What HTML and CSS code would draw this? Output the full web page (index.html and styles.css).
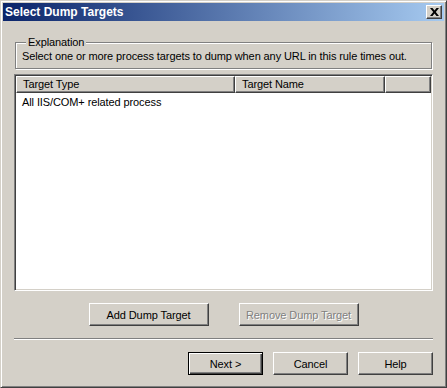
FILE: index.html
```html
<!DOCTYPE html>
<html lang="en">
<head>
    <meta charset="UTF-8">
    <title>Select Dump Targets</title>
    <link rel="stylesheet" href="styles.css">
</head>
<body>
    <div class="window">
        <div class="titlebar">
            <span class="title">Select Dump Targets</span>
            <button class="close-button" aria-label="Close">
                <svg width="9" height="8" viewBox="0 0 9 8">
                    <path d="M0 0h2.5L4.5 2.5 6.5 0H9L5.8 4 9 8H6.5L4.5 5.5 2.5 8H0l3.2-4z" fill="#000"/>
                </svg>
            </button>
        </div>

        <div class="content">
            <fieldset class="group">
                <legend>Explanation</legend>
                <p>Select one or more process targets to dump when any URL in this rule times out.</p>
            </fieldset>

            <div class="listview">
                <div class="list-header">
                    <div class="col col-type">Target Type</div>
                    <div class="col col-name">Target Name</div>
                    <div class="col col-rest"></div>
                </div>
                <div class="list-row">All IIS/COM+ related process</div>
            </div>

            <div class="list-actions">
                <button class="btn wide">Add Dump Target</button>
                <button class="btn wide" disabled>Remove Dump Target</button>
            </div>

            <div class="separator"></div>

            <div class="dialog-actions">
                <button class="btn default">Next &gt;</button>
                <button class="btn">Cancel</button>
                <button class="btn">Help</button>
            </div>
        </div>
    </div>
</body>
</html>
```

FILE: styles.css
```css
body {
    margin: 0;
    font-family: 'Liberation Sans', Arial, sans-serif;
    font-size: 11px;
    letter-spacing: -0.1px;
    color: #000;
    background: #d4d0c8;
}

.window {
    width: 447px;
    height: 388px;
    box-sizing: border-box;
    padding: 2px;
    background: #d4d0c8;
    border: 1px solid;
    border-color: #d4d0c8 #404040 #404040 #d4d0c8;
    box-shadow: inset 1px 1px 0 #fff, inset -1px -1px 0 #808080;
}

.titlebar {
    height: 18px;
    display: flex;
    align-items: center;
    justify-content: space-between;
    padding: 0 2px 0 2px;
    background: linear-gradient(90deg, #0a246a 0%, #a6caf0 100%);
}

.title {
    color: #fff;
    font-weight: bold;
    font-size: 12px;
    letter-spacing: 0;
}

.close-button {
    width: 16px;
    height: 14px;
    padding: 0;
    display: flex;
    align-items: center;
    justify-content: center;
    background: #d4d0c8;
    border: 1px solid;
    border-color: #fff #404040 #404040 #fff;
    box-shadow: inset -1px -1px 0 #808080;
}

.content {
    padding: 0 11px 0 11px;
}

.group {
    margin: 15px 1px 0 1px;
    padding: 0 6px 5px 6px;
    border: 1px solid #808080;
    box-shadow: 1px 1px 0 #fff, inset 1px 1px 0 #fff;
}

.group legend {
    margin-left: 4px;
    padding: 0 2px;
    line-height: 13px;
    background: #d4d0c8;
}

.group p {
    margin: 1px 0 0 0;
    line-height: 13px;
}

.listview {
    margin-top: 5px;
    height: 217px;
    box-sizing: border-box;
    background: #fff;
    border: 1px solid;
    border-color: #808080 #fff #fff #808080;
    box-shadow: inset 1px 1px 0 #404040, inset -1px -1px 0 #d4d0c8;
    padding: 1px;
}

.list-header {
    display: flex;
    height: 17px;
}

.col {
    box-sizing: border-box;
    padding: 0 6px;
    line-height: 15px;
    background: #d4d0c8;
    border: 1px solid;
    border-color: #fff #404040 #404040 #fff;
    box-shadow: inset -1px -1px 0 #808080;
}

.col-type {
    width: 219px;
}

.col-name {
    width: 150px;
}

.col-rest {
    flex: 1;
}

.list-row {
    padding: 3px 6px;
    line-height: 13px;
}

.list-actions {
    margin-top: 12px;
    display: flex;
    justify-content: center;
    gap: 30px;
}

.btn {
    width: 75px;
    height: 23px;
    padding: 0;
    font-family: inherit;
    font-size: 11px;
    letter-spacing: -0.1px;
    color: #000;
    background: #d4d0c8;
    border: 1px solid;
    border-color: #fff #404040 #404040 #fff;
    box-shadow: inset -1px -1px 0 #808080;
}

.btn.wide {
    width: 120px;
}

.btn:disabled {
    color: #808080;
    text-shadow: 1px 1px 0 #fff;
}

.btn.default {
    border-color: #000;
    box-shadow: inset 1px 1px 0 #fff, inset -1px -1px 0 #404040, inset -2px -2px 0 #808080;
}

.separator {
    margin-top: 12px;
    height: 1px;
    background: #808080;
    border-bottom: 1px solid #fff;
}

.dialog-actions {
    margin-top: 12px;
    display: flex;
    justify-content: flex-end;
    gap: 10px;
}
```
